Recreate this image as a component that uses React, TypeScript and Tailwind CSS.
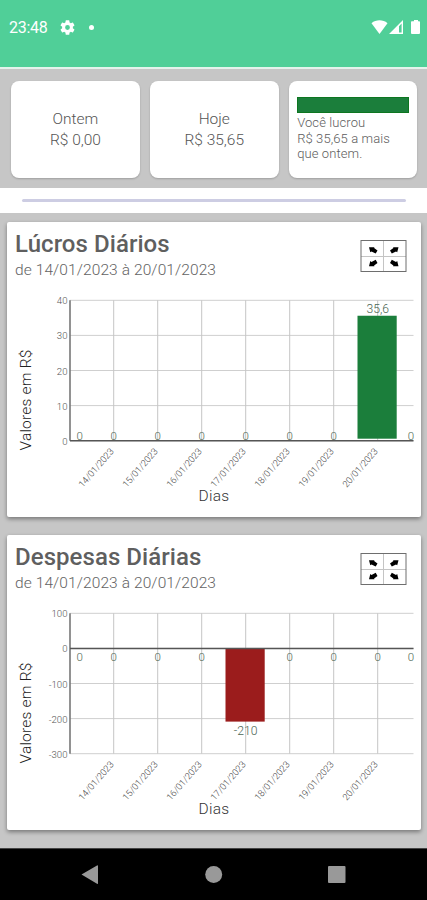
import type { ReactNode } from 'react'

interface DailyEntry {
  label: string
  value: number
}

interface ChartCardProps {
  title: string
  period: string
  min: number
  max: number
  fill: string
  entries: DailyEntry[]
}

const DAYS = [
  '14/01/2023',
  '15/01/2023',
  '16/01/2023',
  '17/01/2023',
  '18/01/2023',
  '19/01/2023',
  '20/01/2023',
]

const profits: DailyEntry[] = DAYS.map((label, i) => ({ label, value: i === 6 ? 35.6 : 0 }))
const expenses: DailyEntry[] = DAYS.map((label, i) => ({ label, value: i === 3 ? -210 : 0 }))

export default function App() {
  return (
    <div className="flex h-[900px] w-[427px] flex-col overflow-hidden bg-[#c6c6c6] font-['Roboto',sans-serif] text-[#737373]">
      <StatusBar />

      {/* Summary cards */}
      <div className="grid h-[119px] shrink-0 grid-cols-3 gap-[10px] pt-3 pr-[9.5px] pl-[11px]">
        <SummaryCard>
          <p>Ontem</p>
          <p>R$ 0,00</p>
        </SummaryCard>
        <SummaryCard>
          <p>Hoje</p>
          <p>R$ 35,65</p>
        </SummaryCard>
        <div className="h-[97px] rounded-lg bg-white px-[8.5px] pt-4 shadow-[0_1px_2px_rgba(0,0,0,0.2)]">
          <div className="h-4 bg-[#1b7e3b] outline-1 -outline-offset-1 outline-[#0d7620]" />
          <p className="mt-[2px] text-[13px] leading-[15.5px] font-light tracking-[0.1px] whitespace-nowrap text-[#5c5c5c]">
            Você lucrou
            <br />
            R$ 35,65 a mais
            <br />
            que ontem.
          </p>
        </div>
      </div>

      {/* Divider */}
      <div className="flex h-[25px] shrink-0 bg-white px-[22px] pt-[11px]">
        <div className="mr-[-1px] h-[2.5px] flex-1 rounded-full bg-[#cdcde3]" />
      </div>

      {/* Charts */}
      <div className="flex flex-1 flex-col gap-[18px] pt-[9px] pr-[6px] pl-[7px]">
        <ChartCard
          title="Lúcros Diários"
          period="de 14/01/2023 à 20/01/2023"
          min={0}
          max={40}
          fill="#1b7e3b"
          entries={profits}
        />
        <ChartCard
          title="Despesas Diárias"
          period="de 14/01/2023 à 20/01/2023"
          min={-300}
          max={100}
          fill="#9b1c1c"
          entries={expenses}
        />
      </div>

      <NavigationBar />
    </div>
  )
}

function StatusBar() {
  return (
    <header className="flex h-[69px] shrink-0 items-start justify-between border-b-2 border-[#e4f3ec] bg-[#50cf98] pt-[19px] pr-[7px] pl-[9px] text-white">
      <div className="flex h-4 items-center">
        <span className="w-[51px] pt-[2px] text-[16px] leading-4 tracking-[-0.3px]">23:48</span>
        <svg width="15" height="15" viewBox="2 2 20 20" fill="currentColor">
          <path d="M19.14 12.94c.04-.3.06-.61.06-.94s-.02-.64-.07-.94l2.03-1.58a.49.49 0 0 0 .12-.61l-1.92-3.32a.49.49 0 0 0-.59-.22l-2.39.96a7 7 0 0 0-1.62-.94l-.36-2.54A.48.48 0 0 0 13.92 2.4h-3.84a.48.48 0 0 0-.48.41l-.36 2.54c-.59.24-1.13.57-1.62.94l-2.39-.96a.48.48 0 0 0-.59.22L2.72 8.87a.48.48 0 0 0 .12.61l2.03 1.58a7.7 7.7 0 0 0 0 1.88l-2.03 1.58a.49.49 0 0 0-.12.61l1.92 3.32c.12.22.37.29.59.22l2.39-.96c.5.38 1.03.7 1.62.94l.36 2.54c.05.24.24.41.48.41h3.84c.24 0 .44-.17.47-.41l.36-2.54c.59-.24 1.13-.56 1.62-.94l2.39.96c.22.08.47 0 .59-.22l1.92-3.32a.48.48 0 0 0-.12-.61zM12 15.2a3.2 3.2 0 1 1 0-6.4 3.2 3.2 0 0 1 0 6.4z" />
        </svg>
        <span className="ml-[14px] size-[5px] rounded-full bg-white" />
      </div>
      <svg width="49" height="16" viewBox="0 0 49 16" fill="currentColor">
        {/* Wi-Fi */}
        <path d="M0.5 4.2C5 0.4 12 0.4 16.5 4.2L8.5 15z" />
        {/* Mobile signal */}
        <path fillRule="evenodd" d="M32 1v14H18zM30.6 4.6 28 7.2v6.4h2.6z" />
        {/* Battery */}
        <path d="M41 2.2h2V1h4v1.2h1.2q.8 0 .8.8v11q0 1-1 1h-7q-1 0-1-1V3q0-.8.8-.8z" />
      </svg>
    </header>
  )
}

function SummaryCard({ children }: { children: ReactNode }) {
  return (
    <div className="flex h-[97px] flex-col items-center justify-center rounded-lg bg-white pt-px text-[15.5px] leading-[21px] font-light text-[#555] shadow-[0_1px_2px_rgba(0,0,0,0.2)]">
      {children}
    </div>
  )
}

function ChartCard({ title, period, min, max, fill, entries }: ChartCardProps) {
  return (
    <section className="h-[295px] shrink-0 rounded-xs bg-white shadow-[0_2px_4px_rgba(0,0,0,0.4)]">
      <div className="flex h-[68px] justify-between pt-[8px] pr-[14px] pl-[8px]">
        <div>
          <h2 className="text-[24px] leading-7 font-medium tracking-[0.06px] text-[#5f5f5f]">{title}</h2>
          <p className="mt-[3px] text-[15.5px] leading-[18px] font-light tracking-[0.1px] text-[#636363]">
            {period}
          </p>
        </div>
        <ExpandIcon />
      </div>
      <BarChart min={min} max={max} fill={fill} entries={entries} />
    </section>
  )
}

function ExpandIcon() {
  return (
    <svg className="mt-[9px]" width="47" height="34" viewBox="0 0 47 34" fill="none">
      <path d="M23.5 1v32M1 17.5h45" stroke="#c4c4c4" />
      <rect x="1" y="1.5" width="45" height="31" stroke="#6e6e6e" />
      <g fill="#000">
        <path d="M9 8.2h5.4l-.3.8 3.400 2.400-1.800 3.200-4.200-2.200-1.200.9z" />
        <path d="M38.500 8.200h-5.400l.3.8-3.400 2.400 1.800 3.200 4.200-2.200 1.200.9z" />
        <path d="M9 27.200h5.400l-.3-.8 3.400-2.400-1.800-3.200-4.200 2.200-1.200-.9z" />
        <path d="M38.500 27.200h-5.400l.3-.8-3.400-2.400 1.800-3.200 4.200 2.200 1.200-.9z" />
      </g>
    </svg>
  )
}

// Plot area inside the chart drawing
const LEFT = 63
const RIGHT = 406.5
const TOP = 10.3
const STEP_Y = 35.1
const STEP_X = 44
const BOTTOM = TOP + STEP_Y * 4

function BarChart({ min, max, fill, entries }: Omit<ChartCardProps, 'title' | 'period'>) {
  const tick = (max - min) / 4
  const toY = (v: number) => TOP + ((max - v) / (max - min)) * (BOTTOM - TOP)
  const toX = (i: number) => 106.7 + i * STEP_X
  const zeroY = toY(0)
  const below = min < 0
  const zeroLabelY = below ? zeroY + 12.8 : zeroY - 0.9

  return (
    <svg className="block" width="414" height="225" viewBox="0 0 414 225">
      {/* Grid */}
      {[0, 1, 2, 3, 4].map((i) => (
        <g key={i}>
          <path d={`M${LEFT} ${TOP + i * STEP_Y}H${RIGHT}`} stroke="#cfcfcf" />
          <text
            x="60.5"
            y={TOP + i * STEP_Y + 4}
            fontSize="9.6"
            fontWeight="300"
            textAnchor="end"
            fill="#555"
          >
            {max - i * tick}
          </text>
        </g>
      ))}
      {entries.map((e, i) => (
        <path key={e.label} d={`M${toX(i)} ${TOP}V${BOTTOM}`} stroke="#c6c6c6" />
      ))}

      {/* Bars */}
      {entries.map((e, i) =>
        e.value === 0 ? null : (
          <rect
            key={e.label}
            x={toX(i) - 20.2}
            y={Math.min(toY(e.value), zeroY)}
            width="39.2"
            height={Math.abs(toY(e.value) - zeroY) - (below ? 0.5 : 2)}
            fill={fill}
          />
        ),
      )}

      {/* Axes */}
      <path d={`M${LEFT} ${TOP}V${BOTTOM}`} stroke="#777" strokeWidth="1.6" />
      <path d={`M${LEFT} ${zeroY}H${RIGHT}`} stroke="#555" strokeWidth="1.5" />

      {/* Values */}
      <g fontSize="11.5" textAnchor="middle" fill="#4c6653" fontWeight="300">
        <text x="72.7" y={zeroLabelY}>0</text>
        {entries.map((e, i) => (
          <text
            key={e.label}
            x={toX(i)}
            y={e.value === 0 ? zeroLabelY : e.value > 0 ? toY(e.value) - 2.6 : toY(e.value) + 13}
            fontSize={e.value === 0 ? 11.5 : 12.2}
          >
            {String(e.value).replace('.', ',')}
          </text>
        ))}
        <text x="404" y={zeroLabelY}>0</text>
      </g>

      {/* Dates */}
      {entries.map((e, i) => (
        <text
          key={e.label}
          transform={`translate(${toX(i) + 0.6} ${BOTTOM + 11}) rotate(-49)`}
          fontSize="9.2"
          fontWeight="300"
          textAnchor="end"
          fill="#444"
        >
          {e.label}
        </text>
      ))}

      {/* Axis names */}
      <text
        x="207"
        y="211"
        fontSize="15.5"
        fontWeight="300"
        letterSpacing="0.3"
        textAnchor="middle"
        fill="#333"
      >
        Dias
      </text>
      <text
        transform="translate(23.5 110) rotate(-90)"
        fontSize="15.5"
        fontWeight="300"
        letterSpacing="0.2"
        textAnchor="middle"
        fill="#222"
      >
        Valores em R$
      </text>
    </svg>
  )
}

function NavigationBar() {
  return (
    <nav className="flex h-[52px] shrink-0 items-center justify-center border-t border-[#444] bg-black">
      <svg width="427" height="51" viewBox="0 0 427 51" fill="#999">
        <path d="M81.5 25.5 97 16.5q1-.5 1 .7v17q0 1.2-1 .6z" />
        <circle cx="213.7" cy="25.5" r="8.5" />
        <rect x="328" y="17" width="17.5" height="17" rx="1" />
      </svg>
    </nav>
  )
}
